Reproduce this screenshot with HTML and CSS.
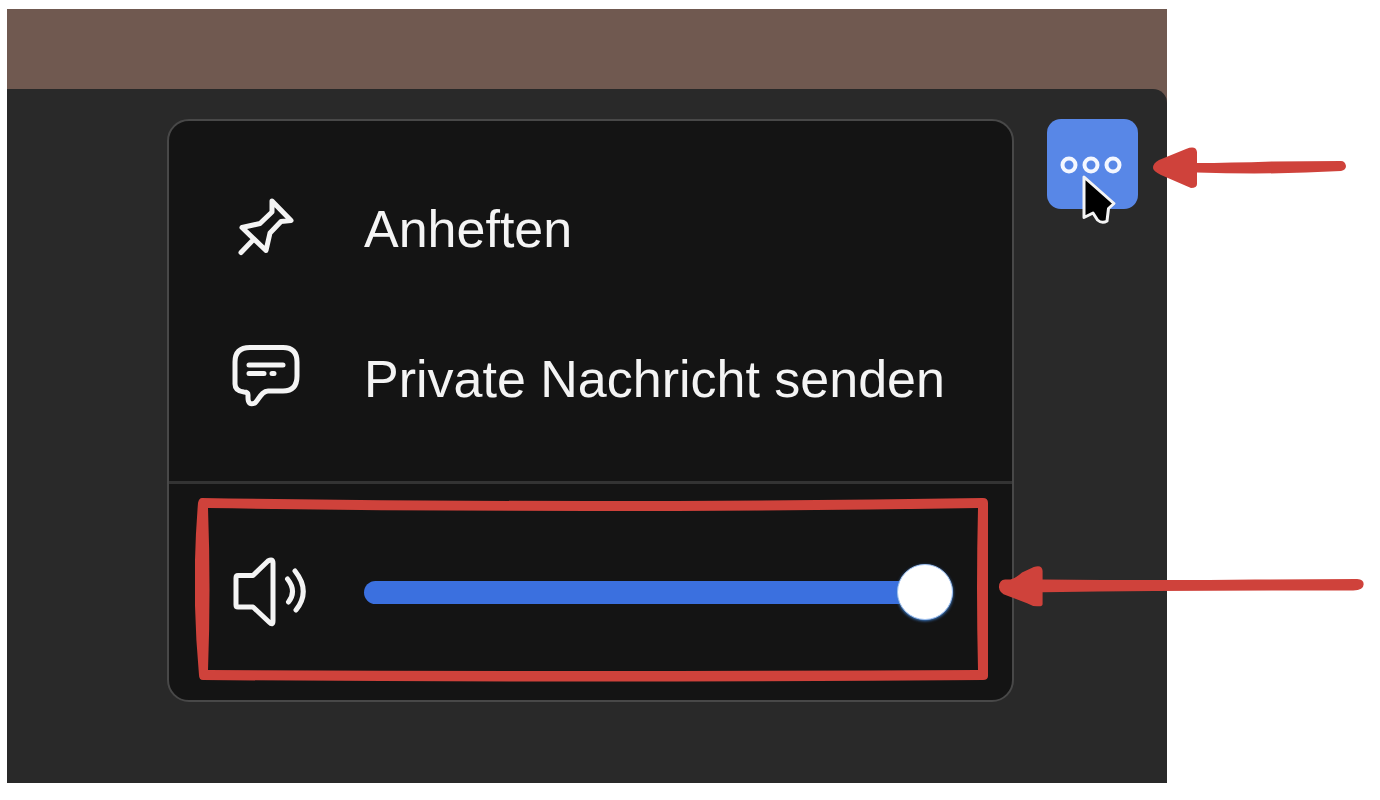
FILE: index.html
```html
<!DOCTYPE html>
<html lang="de">
<head>
<meta charset="utf-8">
<meta name="viewport" content="width=device-width, initial-scale=1">
<title>Teilnehmermenü</title>
<link rel="stylesheet" href="styles.css">
</head>
<body>
<main class="stage">
  <section class="tile">
    <div class="menu">
      <div class="actions">
        <button class="action" type="button">
          <svg class="icon" viewBox="0 0 80 80" aria-hidden="true"><path d="M42 12 61 31.500 51 32.500 40 44 36 61.500 12 38.500 30 34.500 42 23ZM23.500 50.500 11 63.500"/></svg>
          <span>Anheften</span>
        </button>
        <button class="action" type="button">
          <svg class="icon" viewBox="0 0 80 80" aria-hidden="true"><path d="M20 8.500H53Q67 8.500 67 23V37Q67 52 53 52H38C32 52 29 60 25 64Q18 67 18 59V56Q18 53 14 53Q5 52 5 45V23Q5 8.500 20 8.500Z"/><path d="M19 26H53M19 34.500H34M42 34.500H44"/></svg>
          <span>Private Nachricht senden</span>
        </button>
      </div>
      <div class="volume">
        <label for="volume" aria-label="Lautstärke">
          <svg class="icon" viewBox="0 0 80 80" aria-hidden="true"><path d="M8 23.500H23L38 9Q43 6 43 11V69Q43 74 39 70L23 55H8Q6 55 6 53V26Q6 23.500 8 23.500ZM57.500 27Q67 39 58.500 50M65 19Q81 39 66 58"/></svg>
        </label>
        <input class="slider" id="volume" type="range" min="0" max="100" value="100">
        <svg class="frame" viewBox="0 0 793 184" preserveAspectRatio="none" aria-hidden="true"><path fill-rule="evenodd" d="M7 0Q390 6 788 0Q793 0 793 5Q794 90 793 178Q793 182 788 182Q390 185 8 182Q4 182 4 177Q-4 90 3 5Q4 0 7 0ZM13 10Q16 92 13 172Q390 174 783 172Q781 90 783 10Q390 16 13 10Z"/></svg>
        <svg class="arrow-volume" viewBox="442 257 1080 122" preserveAspectRatio="none" aria-hidden="true"><path d="M442 318Q443 298 460 297H476Q490 294 510 276L545 260Q570 252 571 272V297Q940 300 1200 297L1502 296Q1521 297 1521 311Q1521 328 1490 330Q1000 328 571 335V370Q571 378 557 377Q542 378 525 368L465 345Q441 337 442 318Z"/></svg>
      </div>
    </div>
    <div class="more-wrap">
      <button class="more" type="button" aria-label="Weitere Optionen">
        <svg viewBox="0 0 91 90" aria-hidden="true"><circle cx="22" cy="46" r="6.500"/><circle cx="44" cy="46" r="6.500"/><circle cx="66" cy="46" r="6.500"/></svg>
      </button>
      <svg class="cursor" viewBox="34 53 38 56" aria-hidden="true"><path d="M37 58V98.500L46 94 50.500 101Q55 105 60 102L61.500 89.500 67 84.500Z"/></svg>
      <svg class="arrow-more" viewBox="0 0 193 41" aria-hidden="true"><path d="M0 21Q0 16 6 13L33 2Q43-2 44 5V16Q77 16 120 14.500L188 14Q192 14 193 19Q193 23 188 24Q120 28 44 25.500V37Q44 41 38 41L8 28Q0 24 0 21Z"/></svg>
    </div>
  </section>
</main>
</body>
</html>
```
FILE: styles.css
```css
* {
  box-sizing: border-box;
}

body {
  margin: 0;
  min-height: 100vh;
  display: flex;
  padding: 9px 213px 17px 7px;
  background: #fff;
  font-family: "Liberation Sans", Arial, sans-serif;
}

.stage {
  flex: 1;
  display: flex;
  padding-top: 80px;
  background: #705950;
}

.tile {
  flex: 1;
  display: flex;
  align-items: flex-start;
  gap: 33px;
  padding: 30px 29px 81px 160px;
  border-top-right-radius: 14px;
  background: #292929;
}

.menu {
  flex: 1;
  border: 2px solid #484848;
  border-radius: 22px;
  background: #141414;
}

.actions {
  display: flex;
  flex-direction: column;
  padding: 33px 0 27px;
  border-bottom: 3px solid #333;
}

.action {
  display: flex;
  align-items: center;
  gap: 54px;
  min-height: 150px;
  padding: 0 59px 0 61px;
  border: 0;
  background: none;
  color: #f4f4f4;
  font: inherit;
  font-size: 52px;
  line-height: 60px;
  text-align: left;
  white-space: nowrap;
}

.icon {
  display: block;
  flex: none;
  width: 80px;
  height: 80px;
  fill: none;
  stroke: #f4f4f4;
  stroke-width: 5;
  stroke-linecap: round;
  stroke-linejoin: round;
}

.volume {
  position: relative;
  display: flex;
  align-items: center;
  gap: 54px;
  min-height: 216px;
  padding: 0 59px 0 61px;
}

.slider {
  flex: 1;
  min-width: 0;
  height: 56px;
  margin: 0;
  appearance: none;
  background: none;
}

.slider::-webkit-slider-runnable-track {
  height: 23px;
  border-radius: 12px;
  background: #3b70df;
}

.slider::-webkit-slider-thumb {
  appearance: none;
  width: 56px;
  height: 56px;
  margin-top: -17px;
  border: 1px solid #9fc0ef;
  border-radius: 50%;
  background: #fff;
  box-shadow: 0 1px 3px #3d7fd0;
}

.frame,
.arrow-volume,
.arrow-more,
.cursor {
  position: absolute;
  pointer-events: none;
}

.frame,
.arrow-volume,
.arrow-more {
  fill: #cf423b;
}

.frame {
  top: 14px;
  left: 26px;
  width: calc(100% - 50px);
  height: calc(100% - 32px);
}

.arrow-volume {
  top: 82px;
  left: calc(100% - 13px);
  width: 365px;
  height: 41px;
}

.more-wrap {
  position: relative;
  flex: none;
}

.more {
  display: block;
  width: 91px;
  height: 90px;
  padding: 0;
  border: 0;
  border-radius: 14px;
  background: #5887e7;
}

.more svg {
  display: block;
  fill: none;
  stroke: #f4f7ff;
  stroke-width: 4;
}

.cursor {
  top: 53px;
  left: 34px;
  width: 38px;
  height: 56px;
  fill: #000;
  stroke: #f4f4f4;
  stroke-width: 3;
  stroke-linejoin: round;
}

.arrow-more {
  top: 28px;
  left: 106px;
  width: 193px;
  height: 41px;
}
```
